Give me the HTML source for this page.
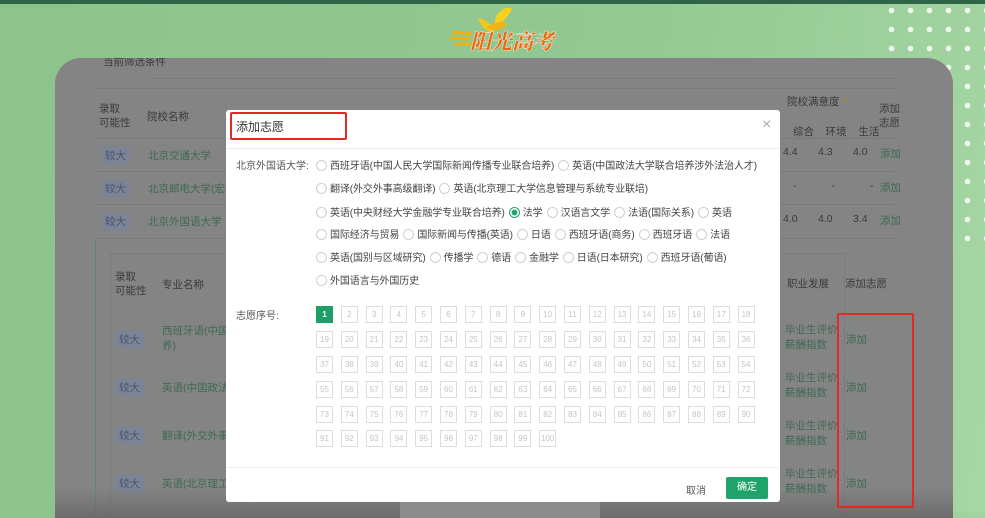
<!DOCTYPE html>
<html><head><meta charset="utf-8"><style>
*{margin:0;padding:0;box-sizing:border-box}
body{width:985px;height:512px;overflow:hidden;position:relative;background:linear-gradient(100deg,#8cc48c 0%,#92c992 60%,#a6d6a4 100%);font-family:"Liberation Sans","Noto Sans CJK SC",sans-serif;font-size:11px;color:#333}
.abs{position:absolute}
.topbar{left:0;top:0;width:985px;height:4px;background:#2f6446}
.dots{left:882px;top:1px;width:103px;height:243px;background-image:radial-gradient(circle,#eef7ee 2.6px,transparent 3px);background-size:19px 19px}
.panel{left:55px;top:58px;width:898px;height:460px;background:#848484;border-radius:26px 26px 0 0;overflow:hidden}
.panel .t{position:absolute;color:#3a3a3a;font-size:10.5px}
.panel .g{position:absolute;color:#3d6a52;font-size:10.5px}
.tag{position:absolute;background:#7c8494;color:#45557a;font-size:10.5px;padding:2px 4px}
.line{position:absolute;background:#7a7a7a}
.dlg{left:226px;top:110px;width:554px;height:392px;background:#fff;border-radius:3px}
.rad{display:inline-block;width:11px;height:11px;border:1px solid #cfcfcf;border-radius:50%;vertical-align:-2px;margin-right:3px}
.rad.on{border-color:#20a56a;background:radial-gradient(circle,#20a56a 2.6px,#fff 3.2px)}
.opt{position:absolute;left:316px;font-size:10px;color:#444;white-space:nowrap;letter-spacing:-0.1px}
.opt span{margin-right:4px}
.grid{position:absolute;left:316px;top:306px;display:grid;grid-template-columns:repeat(18,17px);column-gap:7.8px;row-gap:7.9px}
.grid div{width:17px;height:17px;border:1px solid #ddd;color:#c4c4c4;font-size:8px;text-align:center;line-height:15px}
.grid div.on{background:#1f9f68;border-color:#1f9f68;color:#fff;font-weight:bold}
</style></head><body>
<div class="abs topbar"></div>
<div class="abs dots"></div>
<svg class="abs" style="left:450px;top:4px" width="125" height="52">
<path d="M46 12 Q56 0 62 5 Q56 18 44 22Z" fill="#f7d11e"/>
<path d="M28 14 Q40 16 44 28 Q33 28 28 14Z" fill="#f5c51a"/>
<path d="M36 24 Q50 14 58 20 Q48 30 36 24Z" fill="#f2b316"/>
<path d="M2 28 L22 30 M0 34 L20 35 M4 40 L22 40" stroke="#f0b014" stroke-width="3"/>
<text x="20" y="45" font-family="Liberation Serif,Noto Serif CJK SC,serif" font-size="21" font-weight="bold" font-style="italic" fill="#ea6a12" stroke="#fff" stroke-width="0.8" paint-order="stroke">阳光高考</text>
</svg>
<div class="abs panel">
 <div class="t" style="left:48px;top:-4px">当前筛选条件</div>
 <div class="line" style="left:95px;top:20px;width:745px;height:1px"></div>
 <div class="line" style="left:40px;top:30px;width:800px;height:1px"></div>
 <div class="t" style="left:44px;top:44px;line-height:14px">录取<br>可能性</div>
 <div class="t" style="left:92px;top:51px">院校名称</div>
 <div class="t" style="left:732px;top:36px">院校满意度 <span style="color:#b08a2a">?</span></div>
 <div class="t" style="left:824px;top:44px;line-height:14px">添加<br>志愿</div>
 <div class="t" style="left:738px;top:66px">综合&nbsp;&nbsp;&nbsp;&nbsp;环境&nbsp;&nbsp;&nbsp;&nbsp;生活</div>
 <div class="tag" style="left:46px;top:88px">较大</div><div class="g" style="left:93px;top:90px">北京交通大学</div>
 <div class="tag" style="left:46px;top:121px">较大</div><div class="g" style="left:93px;top:123px">北京邮电大学(宏福</div>
 <div class="tag" style="left:46px;top:154px">较大</div><div class="g" style="left:93px;top:156px">北京外国语大学</div>
 <div class="t" style="left:728px;top:88px">4.4&nbsp;&nbsp;&nbsp;&nbsp;&nbsp;&nbsp;&nbsp;4.3&nbsp;&nbsp;&nbsp;&nbsp;&nbsp;&nbsp;&nbsp;4.0</div><div class="g" style="left:825px;top:88px">添加</div>
 <div class="t" style="left:738px;top:122px">-&nbsp;&nbsp;&nbsp;&nbsp;&nbsp;&nbsp;&nbsp;&nbsp;&nbsp;&nbsp;&nbsp;&nbsp;-&nbsp;&nbsp;&nbsp;&nbsp;&nbsp;&nbsp;&nbsp;&nbsp;&nbsp;&nbsp;&nbsp;&nbsp;-</div><div class="g" style="left:825px;top:122px">添加</div>
 <div class="t" style="left:728px;top:155px">4.0&nbsp;&nbsp;&nbsp;&nbsp;&nbsp;&nbsp;&nbsp;4.0&nbsp;&nbsp;&nbsp;&nbsp;&nbsp;&nbsp;&nbsp;3.4</div><div class="g" style="left:825px;top:155px">添加</div>
 <div class="line" style="left:40px;top:80px;width:800px;height:1px"></div>
 <div class="line" style="left:40px;top:113px;width:800px;height:1px"></div>
 <div class="line" style="left:40px;top:146px;width:800px;height:1px"></div>
 <div class="line" style="left:40px;top:180px;width:800px;height:1px"></div>
 <div class="abs" style="left:40px;top:180px;width:1px;height:280px;background:#5c8a6c"></div>
 <div class="abs" style="left:55px;top:195px;width:735px;height:270px;border:1px solid #7b7b7b"></div>
 <div class="t" style="left:60px;top:212px;line-height:14px">录取<br>可能性</div>
 <div class="t" style="left:107px;top:219px">专业名称</div>
 <div class="t" style="left:732px;top:218px">职业发展</div>
 <div class="t" style="left:790px;top:218px">添加志愿</div>
 <div class="tag" style="left:60px;top:272px">较大</div><div class="g" style="left:107px;top:266px;line-height:15px">西班牙语(中国<br>养)</div>
 <div class="tag" style="left:60px;top:320px">较大</div><div class="g" style="left:107px;top:322px">英语(中国政法</div>
 <div class="tag" style="left:60px;top:368px">较大</div><div class="g" style="left:107px;top:370px">翻译(外交外事</div>
 <div class="tag" style="left:60px;top:416px">较大</div><div class="g" style="left:107px;top:418px">英语(北京理工</div>
 <div class="g" style="left:730px;top:265px;line-height:15px">毕业生评价<br>薪酬指数</div><div class="g" style="left:791px;top:274px">添加</div>
 <div class="g" style="left:730px;top:313px;line-height:15px">毕业生评价<br>薪酬指数</div><div class="g" style="left:791px;top:322px">添加</div>
 <div class="g" style="left:730px;top:361px;line-height:15px">毕业生评价<br>薪酬指数</div><div class="g" style="left:791px;top:370px">添加</div>
 <div class="g" style="left:730px;top:409px;line-height:15px">毕业生评价<br>薪酬指数</div><div class="g" style="left:791px;top:418px">添加</div>
 <div class="abs" style="left:0;top:430px;width:898px;height:30px;background:linear-gradient(#84848400,#6c6c6c)"></div>
 <div class="abs" style="left:345px;top:440px;width:200px;height:30px;background:#8c8c8c"></div>
</div>
<div class="abs" style="left:837px;top:313px;width:77px;height:195px;border:2px solid #e02a23;border-radius:2px"></div>
<div class="abs dlg">
 <div class="abs" style="left:0;top:38px;width:554px;height:1px;background:#eee"></div>
 <div class="abs" style="left:536px;top:6px;font-size:16px;color:#aaa">×</div>
 <div class="abs" style="left:0;top:357px;width:554px;height:1px;background:#f0f0f0"></div>
 <div class="abs" style="left:460px;top:372px;color:#555;font-size:10px">取消</div>
 <div class="abs" style="left:500px;top:367px;width:42px;height:22px;background:#1fa36a;border-radius:2px;color:#fff;font-size:10px;text-align:center;line-height:22px">确定</div>
</div>
<div class="abs" style="left:230px;top:112px;width:117px;height:28px;border:2px solid #e02a23;border-radius:2px;padding:4px 4px;font-size:12px;color:#333">添加志愿</div>
<div class="abs" style="left:236px;top:157px;font-size:10px;color:#555">北京外国语大学:</div>
<div class="opt" style="top:157px"><span><i class="rad"></i>西班牙语(中国人民大学国际新闻传播专业联合培养)</span><span><i class="rad"></i>英语(中国政法大学联合培养涉外法治人才)</span></div>
<div class="opt" style="top:180px"><span><i class="rad"></i>翻译(外交外事高级翻译)</span><span><i class="rad"></i>英语(北京理工大学信息管理与系统专业联培)</span></div>
<div class="opt" style="top:204px"><span><i class="rad"></i>英语(中央财经大学金融学专业联合培养)</span><span><i class="rad on"></i>法学</span><span><i class="rad"></i>汉语言文学</span><span><i class="rad"></i>法语(国际关系)</span><span><i class="rad"></i>英语</span></div>
<div class="opt" style="top:226px"><span><i class="rad"></i>国际经济与贸易</span><span><i class="rad"></i>国际新闻与传播(英语)</span><span><i class="rad"></i>日语</span><span><i class="rad"></i>西班牙语(商务)</span><span><i class="rad"></i>西班牙语</span><span><i class="rad"></i>法语</span></div>
<div class="opt" style="top:249px"><span><i class="rad"></i>英语(国别与区域研究)</span><span><i class="rad"></i>传播学</span><span><i class="rad"></i>德语</span><span><i class="rad"></i>金融学</span><span><i class="rad"></i>日语(日本研究)</span><span><i class="rad"></i>西班牙语(葡语)</span></div>
<div class="opt" style="top:272px"><span><i class="rad"></i>外国语言与外国历史</span></div>
<div class="abs" style="left:236px;top:307px;font-size:10px;color:#555">志愿序号:</div>
<div class="grid">
<div class="on">1</div><div>2</div><div>3</div><div>4</div><div>5</div><div>6</div><div>7</div><div>8</div><div>9</div><div>10</div><div>11</div><div>12</div><div>13</div><div>14</div><div>15</div><div>16</div><div>17</div><div>18</div>
<div>19</div><div>20</div><div>21</div><div>22</div><div>23</div><div>24</div><div>25</div><div>26</div><div>27</div><div>28</div><div>29</div><div>30</div><div>31</div><div>32</div><div>33</div><div>34</div><div>35</div><div>36</div>
<div>37</div><div>38</div><div>39</div><div>40</div><div>41</div><div>42</div><div>43</div><div>44</div><div>45</div><div>46</div><div>47</div><div>48</div><div>49</div><div>50</div><div>51</div><div>52</div><div>53</div><div>54</div>
<div>55</div><div>56</div><div>57</div><div>58</div><div>59</div><div>60</div><div>61</div><div>62</div><div>63</div><div>64</div><div>65</div><div>66</div><div>67</div><div>68</div><div>69</div><div>70</div><div>71</div><div>72</div>
<div>73</div><div>74</div><div>75</div><div>76</div><div>77</div><div>78</div><div>79</div><div>80</div><div>81</div><div>82</div><div>83</div><div>84</div><div>85</div><div>86</div><div>87</div><div>88</div><div>89</div><div>90</div>
<div>91</div><div>92</div><div>93</div><div>94</div><div>95</div><div>96</div><div>97</div><div>98</div><div>99</div><div>100</div>
</div>
</body></html>
